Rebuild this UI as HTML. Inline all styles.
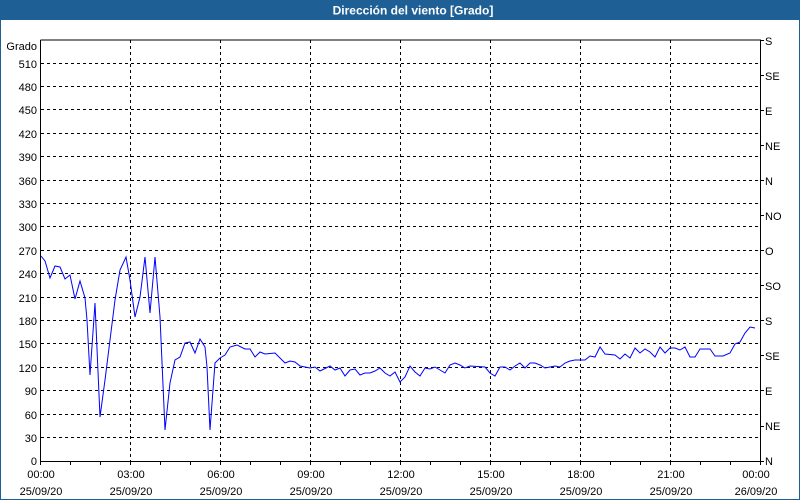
<!DOCTYPE html>
<html><head><meta charset="utf-8"><style>
html,body{margin:0;padding:0;background:#fff;}
svg{display:block;}
text{font-family:"Liberation Sans","DejaVu Sans",sans-serif;font-size:11px;fill:#000;}
</style></head><body>
<svg width="800" height="500" viewBox="0 0 800 500" xmlns="http://www.w3.org/2000/svg">
<rect x="0" y="0" width="800" height="500" fill="#fff"/>
<rect x="0" y="0" width="800" height="20" fill="#1e5f96"/>
<rect x="0.5" y="0.5" width="799" height="499" fill="none" stroke="#1e5f96" stroke-width="1"/>
<text x="413" y="14.5" text-anchor="middle" style="font-weight:bold;font-size:12px;fill:#fff">Dirección del viento [Grado]</text>

<g stroke="#000" stroke-width="1" stroke-dasharray="3,3" fill="none">
<path d="M41 437.5H760M41 414.5H760M41 390.5H760M41 367.5H760M41 343.5H760M41 320.5H760M41 297.5H760M41 273.5H760M41 250.5H760M41 226.5H760M41 203.5H760M41 180.5H760M41 156.5H760M41 133.5H760M41 109.5H760M41 86.5H760M41 63.5H760"/>
<path d="M130.5 40V461M220.5 40V461M310.5 40V461M400.5 40V461M490.5 40V461M580.5 40V461M670.5 40V461"/>
</g>
<g stroke="#000" stroke-width="1" fill="none">
<path d="M40.5 40V461.5H760.5V40H40.5"/>
<path d="M70.5 461v4M100.5 461v4M130.5 461v4M160.5 461v4M190.5 461v4M220.5 461v4M250.5 461v4M280.5 461v4M310.5 461v4M340.5 461v4M370.5 461v4M400.5 461v4M430.5 461v4M460.5 461v4M490.5 461v4M520.5 461v4M550.5 461v4M580.5 461v4M610.5 461v4M640.5 461v4M670.5 461v4M700.5 461v4M730.5 461v4M760.5 461v4M40.5 461v4"/>
<path d="M760 40.5h4M760 75.5h4M760 110.5h4M760 145.5h4M760 180.5h4M760 215.5h4M760 250.5h4M760 285.5h4M760 320.5h4M760 355.5h4M760 390.5h4M760 426.5h4M760 461.5h4"/>
</g>

<g text-anchor="end">
<text x="37" y="50">Grado</text>
<text x="37" y="68">510</text><text x="37" y="91">480</text><text x="37" y="114">450</text>
<text x="37" y="138">420</text><text x="37" y="161">390</text><text x="37" y="185">360</text>
<text x="37" y="208">330</text><text x="37" y="231">300</text><text x="37" y="255">270</text>
<text x="37" y="278">240</text><text x="37" y="302">210</text><text x="37" y="325">180</text>
<text x="37" y="348">150</text><text x="37" y="372">120</text><text x="37" y="395">90</text>
<text x="37" y="419">60</text><text x="37" y="442">30</text><text x="37" y="465">0</text>
</g>
<g>
<text x="765" y="45">S</text><text x="765" y="80">SE</text><text x="765" y="115">E</text>
<text x="765" y="150">NE</text><text x="765" y="185">N</text><text x="765" y="220">NO</text>
<text x="765" y="255">O</text><text x="765" y="290">SO</text><text x="765" y="325">S</text>
<text x="765" y="360">SE</text><text x="765" y="395">E</text><text x="765" y="430">NE</text>
<text x="765" y="465">N</text>
</g>
<g text-anchor="middle">
<text x="41" y="478">00:00</text><text x="41" y="495">25/09/20</text>
<text x="131" y="478">03:00</text><text x="131" y="495">25/09/20</text>
<text x="221" y="478">06:00</text><text x="221" y="495">25/09/20</text>
<text x="311" y="478">09:00</text><text x="311" y="495">25/09/20</text>
<text x="401" y="478">12:00</text><text x="401" y="495">25/09/20</text>
<text x="491" y="478">15:00</text><text x="491" y="495">25/09/20</text>
<text x="581" y="478">18:00</text><text x="581" y="495">25/09/20</text>
<text x="671" y="478">21:00</text><text x="671" y="495">25/09/20</text>
<text x="756" y="478">00:00</text><text x="756" y="495">26/09/20</text>
</g>

<polyline fill="none" stroke="#0000ff" stroke-width="1" points="41,256 45,261 50,278 55,266 60,267 65,279 70,275 75,299 80,281 85,298 87,320 90,375 95,303 100,417 105,380 110,340 115,300 120,270 126,257 130,280 135,317 140,297 145,257 150,313 155,257 160,317 165,430 170,383 175,360 180,357 185,343 190,342 195,353 200,339 205,347 207,367 210,430 215,363 220,358 225,355 230,347 237,345 245,349 250,349 255,357 260,352 265,354 275,353 285,363 290,361 295,362 300,366 310,368 315,367 320,371 330,366 335,370 340,368 345,376 350,370 355,369 360,375 365,373 370,373 375,371 380,368 385,373 390,376 395,372 400,382 405,377 410,366 415,372 420,376 425,368 430,369 435,367 440,370 445,373 450,365 455,363 460,365 465,368 470,366 485,367 490,373 495,376 500,367 505,367 510,370 515,366 520,363 525,368 530,363 535,363 540,365 545,368 550,367 555,366 560,367 565,363 570,361 575,360 585,360 590,356 595,357 600,347 605,354 615,355 620,359 625,354 630,358 635,348 640,353 645,349 650,352 655,357 660,347 665,353 670,348 675,348 680,350 685,347 690,357 695,357 700,349 710,349 715,356 723,356 730,353 735,344 740,342 745,333 750,327 755,328"/>
</svg>
</body></html>
